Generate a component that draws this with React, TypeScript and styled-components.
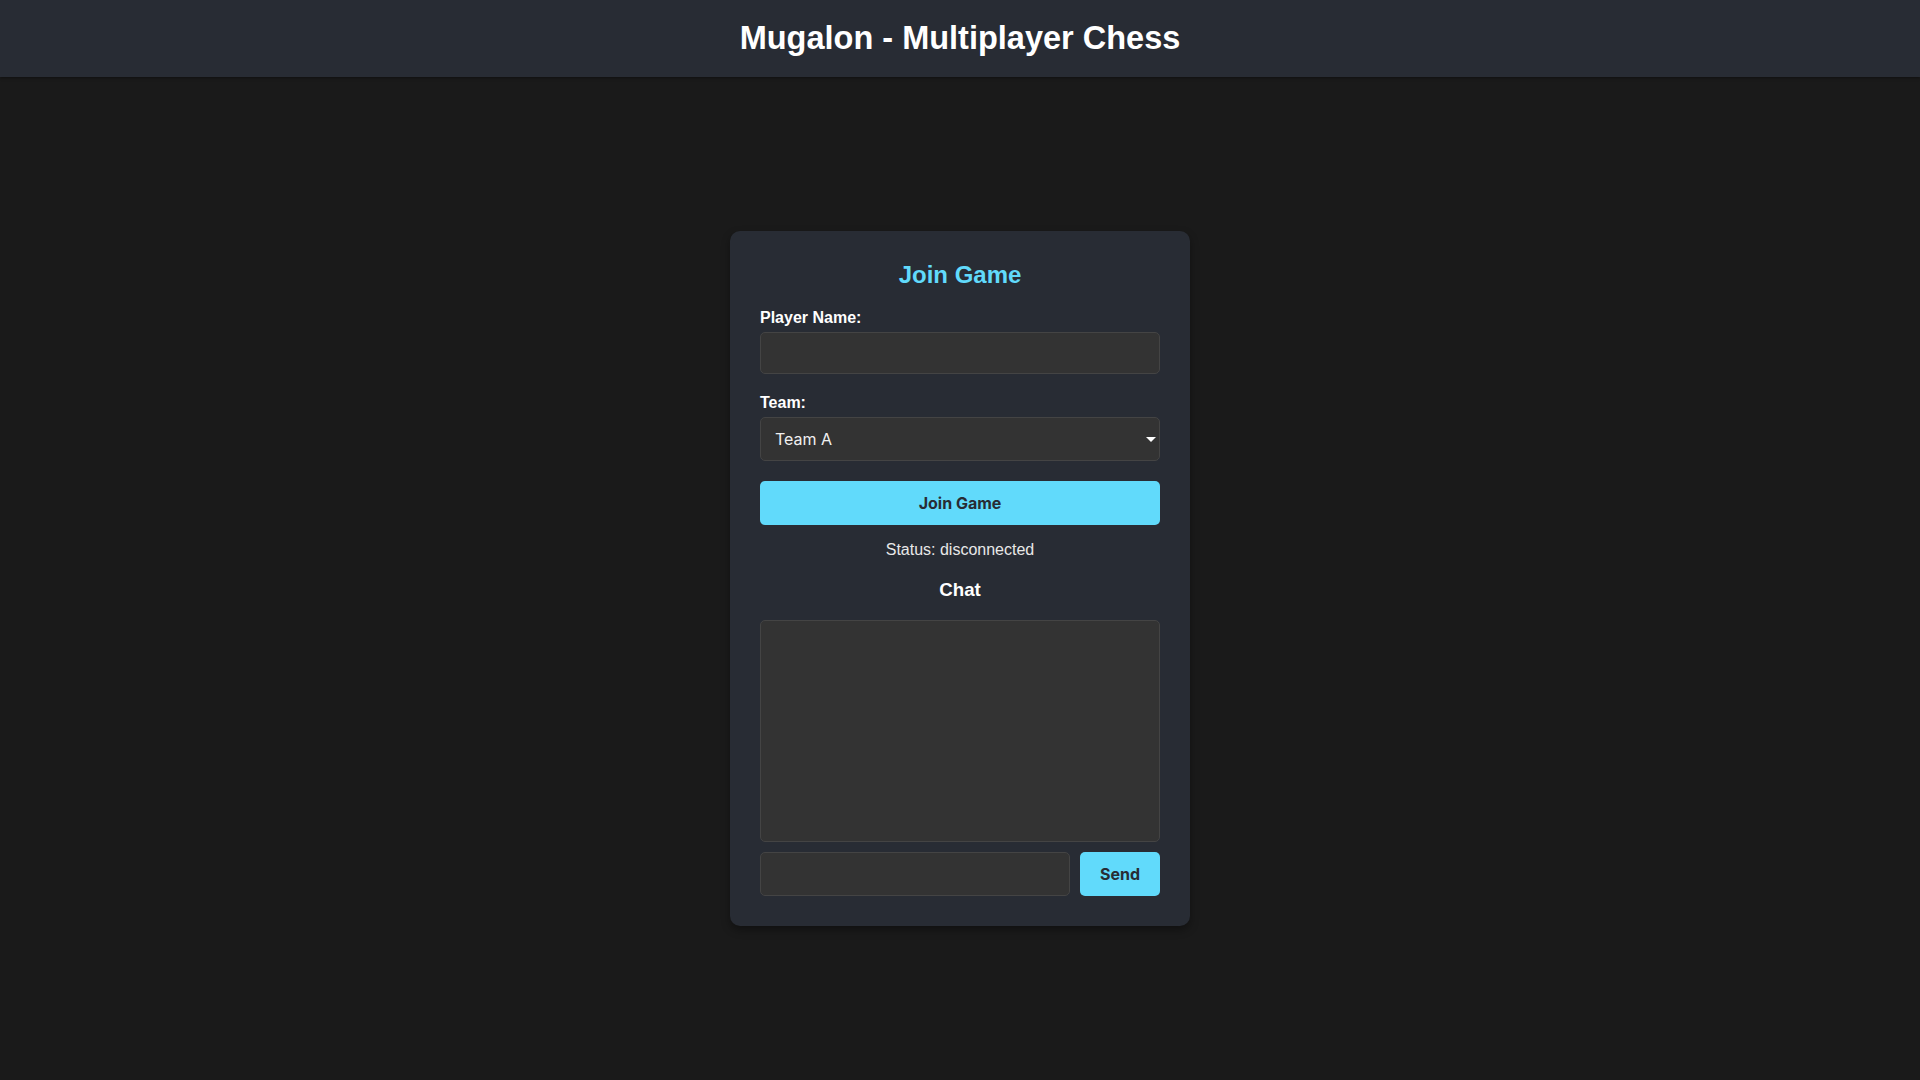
import React, { useState } from "react";
import styled, { createGlobalStyle } from "styled-components";

const GlobalStyle = createGlobalStyle`
  * { box-sizing: border-box; }
  html, body { margin: 0; padding: 0; }
  body {
    background: #1a1a1a;
    color: #ffffff;
    font-family: "Liberation Sans", Arial, sans-serif;
    font-size: 16px;
  }
`;

const Page = styled.div`
  min-height: 100vh;
  display: flex;
  flex-direction: column;
`;

const Header = styled.header`
  background: #282c34;
  height: 77px;
  display: flex;
  align-items: center;
  justify-content: center;
  box-shadow: 0 1px 3px rgba(0, 0, 0, 0.4);
`;

const Title = styled.h1`
  margin: 0;
  font-size: 32.5px;
  font-weight: 700;
  color: #ffffff;
  line-height: 37px;
`;

const Main = styled.main`
  flex: 1;
  display: flex;
  align-items: center;
  justify-content: center;
`;

const Card = styled.div`
  width: 460px;
  background: #282c34;
  border-radius: 10px;
  padding: 30px;
  box-shadow: 0 4px 8px rgba(0, 0, 0, 0.35);
  display: flex;
  flex-direction: column;
`;

const CardTitle = styled.h2`
  margin: 0 0 20px;
  font-size: 24px;
  line-height: 28px;
  font-weight: 700;
  color: #61dafb;
  text-align: center;
`;

const FormGroup = styled.div`
  display: flex;
  flex-direction: column;
  margin-bottom: 20px;
`;

const Label = styled.label`
  font-weight: 700;
  font-size: 16px;
  line-height: 18px;
  margin-bottom: 5px;
  color: #ffffff;
`;

const TextInput = styled.input<{ $h: number }>`
  height: ${(p) => p.$h}px;
  width: 100%;
  background: #333333;
  border: 1px solid #444444;
  border-radius: 5px;
  color: #ffffff;
  padding: 0 12px;
  font-family: Inter, "Liberation Sans", sans-serif;
  font-size: 16px;
  outline: none;
`;

const SelectWrap = styled.div`
  position: relative;
  width: 100%;
`;

const Select = styled.select`
  appearance: none;
  -webkit-appearance: none;
  height: 44px;
  width: 100%;
  background: #333333;
  border: 1px solid #444444;
  border-radius: 5px;
  color: #f0f0f0;
  padding: 0 30px 0 14px;
  font-family: Inter, "Liberation Sans", sans-serif;
  font-size: 16px;
  outline: none;
`;

const SelectArrow = styled.svg`
  position: absolute;
  right: 4px;
  top: 20px;
  width: 10px;
  height: 5px;
  pointer-events: none;
`;

const PrimaryButton = styled.button<{ $w?: string }>`
  height: 44px;
  width: ${(p) => p.$w || "100%"};
  flex-shrink: 0;
  background: #61dafb;
  color: #282c34;
  border: none;
  border-radius: 5px;
  font-family: Inter, "Liberation Sans", sans-serif;
  font-size: 16px;
  font-weight: 700;
  cursor: pointer;
`;

const Status = styled.p`
  margin: 16px 0 0;
  text-align: center;
  font-size: 16px;
  line-height: 18px;
  color: #e8e8e8;
`;

const ChatTitle = styled.h3`
  margin: 20px 0 19px;
  text-align: center;
  font-size: 18.72px;
  line-height: 22px;
  font-weight: 700;
  color: #ffffff;
`;

const ChatBox = styled.div`
  height: 222px;
  background: #333333;
  border: 1px solid #444444;
  border-radius: 5px;
  padding: 10px;
  overflow-y: auto;
`;

const ChatRow = styled.div`
  display: flex;
  gap: 10px;
  margin-top: 10px;
`;

export default function App() {
  const [name, setName] = useState("");
  const [team, setTeam] = useState("A");
  const [msg, setMsg] = useState("");
  return (
    <>
      <GlobalStyle />
      <Page>
        <Header>
          <Title>Mugalon - Multiplayer Chess</Title>
        </Header>
        <Main>
          <Card>
            <CardTitle>Join Game</CardTitle>
            <FormGroup>
              <Label htmlFor="player">Player Name:</Label>
              <TextInput
                id="player"
                $h={42}
                value={name}
                onChange={(e) => setName(e.target.value)}
              />
            </FormGroup>
            <FormGroup>
              <Label htmlFor="team">Team:</Label>
              <SelectWrap>
                <Select id="team" value={team} onChange={(e) => setTeam(e.target.value)}>
                  <option value="A">Team A</option>
                  <option value="B">Team B</option>
                </Select>
                <SelectArrow viewBox="0 0 10 5">
                  <path d="M0 0 H10 L5 5 Z" fill="#ffffff" />
                </SelectArrow>
              </SelectWrap>
            </FormGroup>
            <PrimaryButton>Join Game</PrimaryButton>
            <Status>Status: disconnected</Status>
            <ChatTitle>Chat</ChatTitle>
            <ChatBox />
            <ChatRow>
              <TextInput $h={44} value={msg} onChange={(e) => setMsg(e.target.value)} />
              <PrimaryButton $w="80px">Send</PrimaryButton>
            </ChatRow>
          </Card>
        </Main>
      </Page>
    </>
  );
}
